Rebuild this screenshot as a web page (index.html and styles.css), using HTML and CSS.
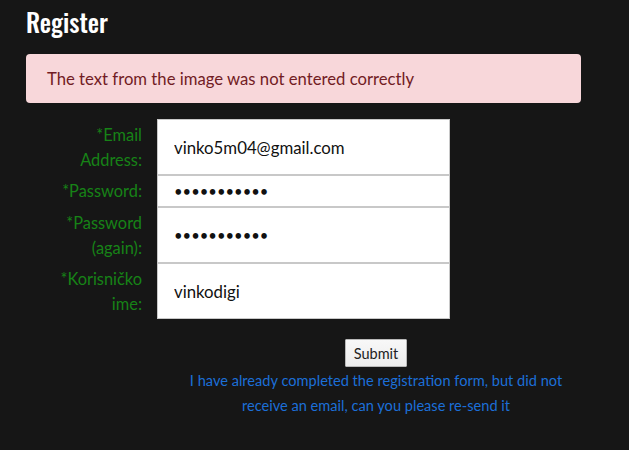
FILE: index.html
```html
<!DOCTYPE html>
<html>
<head>
<meta charset="utf-8">
<link rel="stylesheet" href="styles.css">
</head>
<body>
<div class="page">
  <h1 class="title">Register</h1>
  <div class="alert">The text from the image was not entered correctly</div>
  <table class="form">
    <tr class="row-tall">
      <td class="label">*Email<br>Address:</td>
      <td class="field"><input class="input" type="text" value="vinko5m04@gmail.com"></td>
    </tr>
    <tr>
      <td class="label">*Password:</td>
      <td class="field"><input class="input input-pass" type="password" value="vinko5m04ab"></td>
    </tr>
    <tr class="row-tall">
      <td class="label">*Password<br>(again):</td>
      <td class="field"><input class="input input-pass" type="password" value="vinko5m04ab"></td>
    </tr>
    <tr class="row-tall">
      <td class="label">*Korisničko<br>ime:</td>
      <td class="field"><input class="input" type="text" value="vinkodigi"></td>
    </tr>
  </table>
  <div class="actions">
    <button class="submit" type="button">Submit</button>
    <a class="resend" href="#">I have already completed the registration form, but did not receive an email, can you please re-send it</a>
  </div>
</div>
</body>
</html>
```
FILE: styles.css
```css
html, body {
  margin: 0;
  padding: 0;
  background: #161616;
}
body {
  font-family: "Lato", "Open Sans", sans-serif;
  width: 629px;
  height: 450px;
  overflow: hidden;
}
.page {
  padding: 0 48px 0 26px;
}
.title {
  margin: 0;
  padding-top: 5px;
  font-family: "Oswald", "Liberation Sans Narrow", "DejaVu Sans Condensed", sans-serif;
  font-weight: 500;
  font-size: 25.3px;
  line-height: 34px;
  color: #ffffff;
}
.alert {
  margin-top: 15px;
  height: 49px;
  box-sizing: border-box;
  padding: 0 21px;
  display: flex;
  align-items: center;
  background: #f8d7da;
  color: #721c24;
  border-radius: 4px;
  font-size: 16.7px;
}
.form {
  margin-top: 16px;
  margin-left: 25px;
  border-collapse: collapse;
}
.form td {
  padding: 0;
}
.label {
  width: 91px;
  text-align: right;
  color: #178317;
  font-size: 16.4px;
  line-height: 25px;
  padding: 3px 15px 3px 0 !important;
  vertical-align: top;
}
.field {
  height: 32px;
}
.row-tall .field {
  height: 56px;
}
.input {
  display: block;
  width: 293px;
  height: 100%;
  box-sizing: border-box;
  border: 1px solid #c8c8c8;
  margin: 0;
  padding: 0 16px;
  font-family: inherit;
  font-size: 16.8px;
  color: #111;
  background: #fff;
  outline: none;
}
.input-pass {
  font-size: 14.8px;
}
.actions {
  margin-left: 146px;
  width: 408px;
  display: flex;
  flex-direction: column;
  align-items: center;
  margin-top: 20px;
}
.submit {
  height: 28px;
  padding: 0 8px;
  font-family: inherit;
  font-size: 14.5px;
  color: #222;
  background: linear-gradient(#f8f8f8, #ececec);
  border: 1px solid #b8b8b8;
  border-radius: 1px;
}
.resend {
  margin-top: 1px;
  text-align: center;
  color: #1c6fd8;
  font-size: 14.6px;
  line-height: 25px;
  text-decoration: none;
}
```
